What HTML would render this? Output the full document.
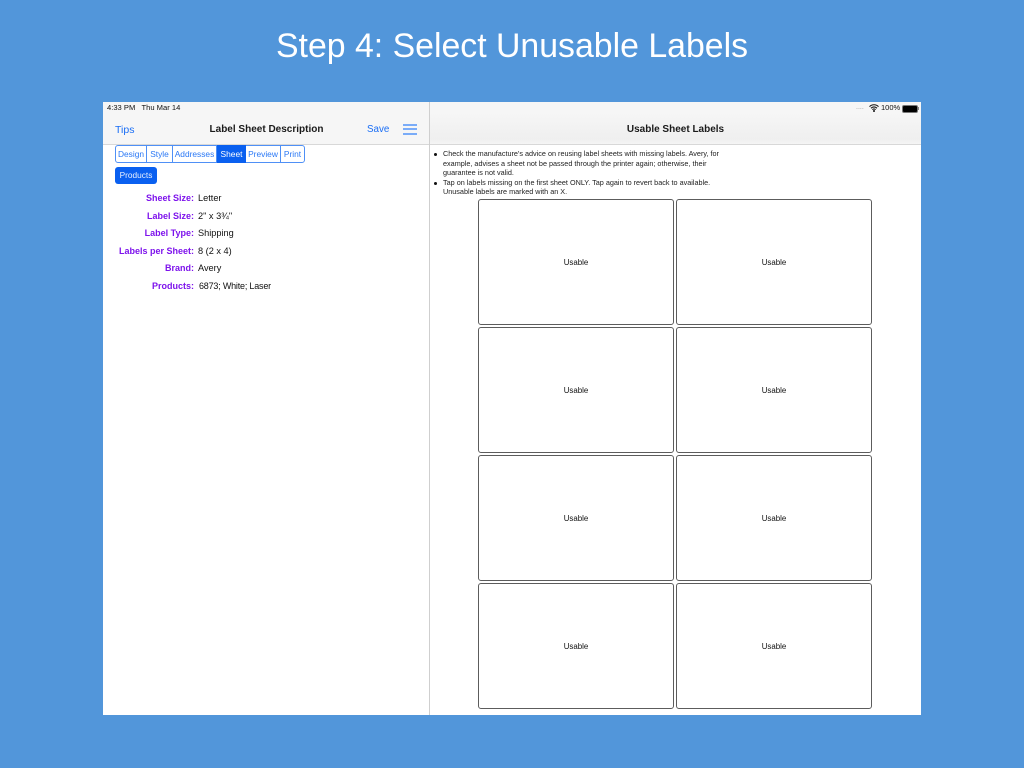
<!DOCTYPE html>
<html><head><meta charset="utf-8"><style>
html,body{margin:0;padding:0}
body{width:1024px;height:768px;background:#5296da;position:relative;overflow:hidden;font-family:"Liberation Sans",sans-serif;color:#000}
.a{position:absolute;white-space:nowrap}
#w{position:absolute;left:0;top:0;width:1024px;height:768px;filter:blur(.35px)}
.seg{position:absolute;top:145px;height:18px;line-height:18px;font-size:8.4px;color:#2a78f5;text-align:center;border-right:1px solid #4f90f6;box-sizing:border-box}
.k{position:absolute;right:830px;color:#7d12ec;font-weight:bold;font-size:9px;white-space:nowrap}
.v{position:absolute;left:198px;font-size:9.2px;white-space:nowrap;color:#111}
.l{position:absolute;width:196px;height:126px;box-sizing:border-box;border:1px solid #5c5c5c;border-radius:3px;background:#fff;font-size:7.9px;text-align:center;line-height:125px;color:#111}
</style></head><body>
<div class="a" style="left:0;top:26px;width:1024px;text-align:center;color:#fff;font-size:33.85px;line-height:40px">Step 4: Select Unusable Labels</div>
<div id="w">
<div class="a" style="left:103px;top:102px;width:818px;height:613px;background:#fff"></div>
<div class="a" style="left:103px;top:102px;width:818px;height:42px;background:#f6f6f6;border-bottom:1px solid #d8d8d8"></div>
<div class="a" style="left:429px;top:102px;width:1px;height:613px;background:#cfcfcf"></div>
<div class="a" style="left:430px;top:112px;width:491px;height:32px;background:linear-gradient(#f6f6f6,#efefef 85%,#f5f5f5)"></div>
<div class="a" style="left:107px;top:103px;font-size:7.6px;line-height:10px;color:#111">4:33 PM&nbsp;&nbsp; Thu Mar 14</div>
<div class="a" style="left:856px;top:103px;font-size:7px;line-height:10px;color:#999">....</div>
<svg class="a" style="left:869px;top:104px" width="10" height="8" viewBox="0 0 10 8"><path d="M.5 2.6a6.4 6.4 0 0 1 9 0M2 4.2a4.2 4.2 0 0 1 6 0M3.4 5.6a2.2 2.2 0 0 1 3.2 0" fill="none" stroke="#111" stroke-width="1.1"/><circle cx="5" cy="7" r="1" fill="#111"/></svg>
<div class="a" style="left:881px;top:103px;font-size:7.5px;line-height:10px;color:#111">100%</div>
<div class="a" style="left:902px;top:105px;width:14px;height:6px;background:#000;border:1px solid #777;border-radius:2px"></div>
<div class="a" style="left:918px;top:107px;width:1px;height:3px;background:#888"></div>
<div class="a" style="left:115px;top:123px;font-size:10.5px;line-height:14px;color:#1a6ef5">Tips</div>
<div class="a" style="left:103px;top:123px;width:327px;text-align:center;font-size:10px;font-weight:bold;line-height:14px;color:#1a1a1a">Label Sheet Description</div>
<div class="a" style="left:367px;top:123px;font-size:9.8px;line-height:14px;color:#1a6ef5">Save</div>
<div class="a" style="left:403px;top:124px;width:14px;height:2px;background:#7aacf8"></div>
<div class="a" style="left:403px;top:128px;width:14px;height:2px;background:#7aacf8"></div>
<div class="a" style="left:403px;top:133px;width:14px;height:2px;background:#7aacf8"></div>
<div class="a" style="left:430px;top:123px;width:491px;text-align:center;font-size:10px;font-weight:bold;line-height:14px;color:#1a1a1a">Usable Sheet Labels</div>
<div class="a" style="left:115px;top:145px;width:190px;height:18px;box-sizing:border-box;border:1px solid #4f90f6;border-radius:3px"></div>
<div class="seg" style="left:116px;width:31px">Design</div>
<div class="seg" style="left:147px;width:26px">Style</div>
<div class="seg" style="left:173px;width:44px">Addresses</div>
<div class="seg" style="left:217px;width:29px;background:#0a60f0;color:#fff;border-right:0">Sheet</div>
<div class="seg" style="left:246px;width:35px">Preview</div>
<div class="seg" style="left:281px;width:23px;border-right:0">Print</div>
<div class="a" style="left:115px;top:167px;width:42px;height:17px;line-height:17px;background:#0a60f0;color:#e8f0ff;border-radius:3px;font-size:8.3px;text-align:center">Products</div>
<div class="k" style="top:193px">Sheet Size:</div><div class="v" style="top:193px">Letter</div>
<div class="k" style="top:211px">Label Size:</div><div class="v" style="top:211px">2" x 3¾"</div>
<div class="k" style="top:228px">Label Type:</div><div class="v" style="top:228px">Shipping</div>
<div class="k" style="top:246px">Labels per Sheet:</div><div class="v" style="top:246px">8 (2 x 4)</div>
<div class="k" style="top:263px">Brand:</div><div class="v" style="top:263px">Avery</div>
<div class="k" style="top:281px">Products:</div><div class="v" style="top:281px;left:199px;font-size:9px;letter-spacing:-.2px">6873; White; Laser</div>
<div style="position:absolute;left:443px;top:149px;font-size:7.25px;line-height:9.6px;color:#222;white-space:nowrap">Check the manufacture's advice on reusing label sheets with missing labels. Avery, for<br>example, advises a sheet not be passed through the printer again; otherwise, their<br>guarantee is not valid.<br>Tap on labels missing on the first sheet ONLY. Tap again to revert back to available.<br>Unusable labels are marked with an X.</div>
<div class="a" style="left:434px;top:153px;width:3px;height:3px;border-radius:50%;background:#111"></div>
<div class="a" style="left:434px;top:182px;width:3px;height:3px;border-radius:50%;background:#111"></div>
<div class="l" style="left:478px;top:199px">Usable</div><div class="l" style="left:676px;top:199px">Usable</div>
<div class="l" style="left:478px;top:327px">Usable</div><div class="l" style="left:676px;top:327px">Usable</div>
<div class="l" style="left:478px;top:455px">Usable</div><div class="l" style="left:676px;top:455px">Usable</div>
<div class="l" style="left:478px;top:583px">Usable</div><div class="l" style="left:676px;top:583px">Usable</div>
</div>
</body></html>
